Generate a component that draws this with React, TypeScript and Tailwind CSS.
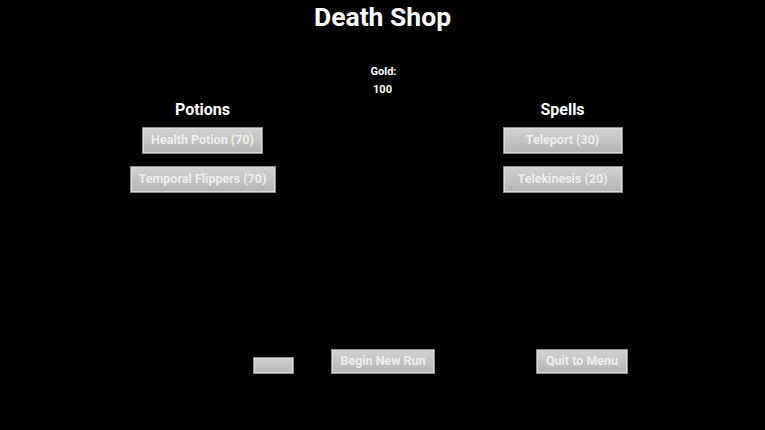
import React from 'react';

const btn =
  'flex items-center justify-center border border-[#8c8c8c] bg-gradient-to-b from-[#d2d2d2] to-[#b4b4b4] shadow-[inset_0_0_0_1px_#dcdcdc] text-[12.5px] font-bold text-[#eeeeee] whitespace-nowrap';

export default function App() {
  return (
    <div className="h-[430px] w-[765px] overflow-hidden bg-black font-['Roboto','Liberation_Sans',sans-serif] text-white">
      {/* Title */}
      <div className="flex h-[34px] items-center justify-center pt-[1px] text-[26.5px] font-bold leading-none">
        Death Shop
      </div>

      {/* Gold */}
      <div className="mt-[29px] flex flex-col items-center text-[11px] font-bold leading-[18px]">
        <span className="pl-[2px]">Gold:</span>
        <span>100</span>
      </div>

      {/* Shop columns */}
      <div className="mx-auto mt-[1px] grid w-[540px] grid-cols-3">
        <div className="flex flex-col items-center">
          <div className="h-[20px] text-[16px] font-bold leading-[20px]">Potions</div>
          <button className={`${btn} mt-[7px] h-[27px] w-[121px]`}>Health Potion (70)</button>
          <button className={`${btn} mt-[12px] h-[27px] w-[146px]`}>Temporal Flippers (70)</button>
        </div>
        <div />
        <div className="flex flex-col items-center">
          <div className="h-[20px] text-[16px] font-bold leading-[20px]">Spells</div>
          <button className={`${btn} mt-[7px] h-[27px] w-[120px]`}>Teleport (30)</button>
          <button className={`${btn} mt-[12px] h-[27px] w-[120px]`}>Telekinesis (20)</button>
        </div>
      </div>

      {/* Bottom actions */}
      <div className="mt-[156px] flex h-[25px] items-center">
        <button className={`${btn} ml-[253px] mt-[7px] h-[17px] w-[41px]`} />
        <button className={`${btn} ml-[37px] h-[25px] w-[104px]`}>Begin New Run</button>
        <button className={`${btn} ml-[101px] h-[25px] w-[92px]`}>Quit to Menu</button>
      </div>
    </div>
  );
}
